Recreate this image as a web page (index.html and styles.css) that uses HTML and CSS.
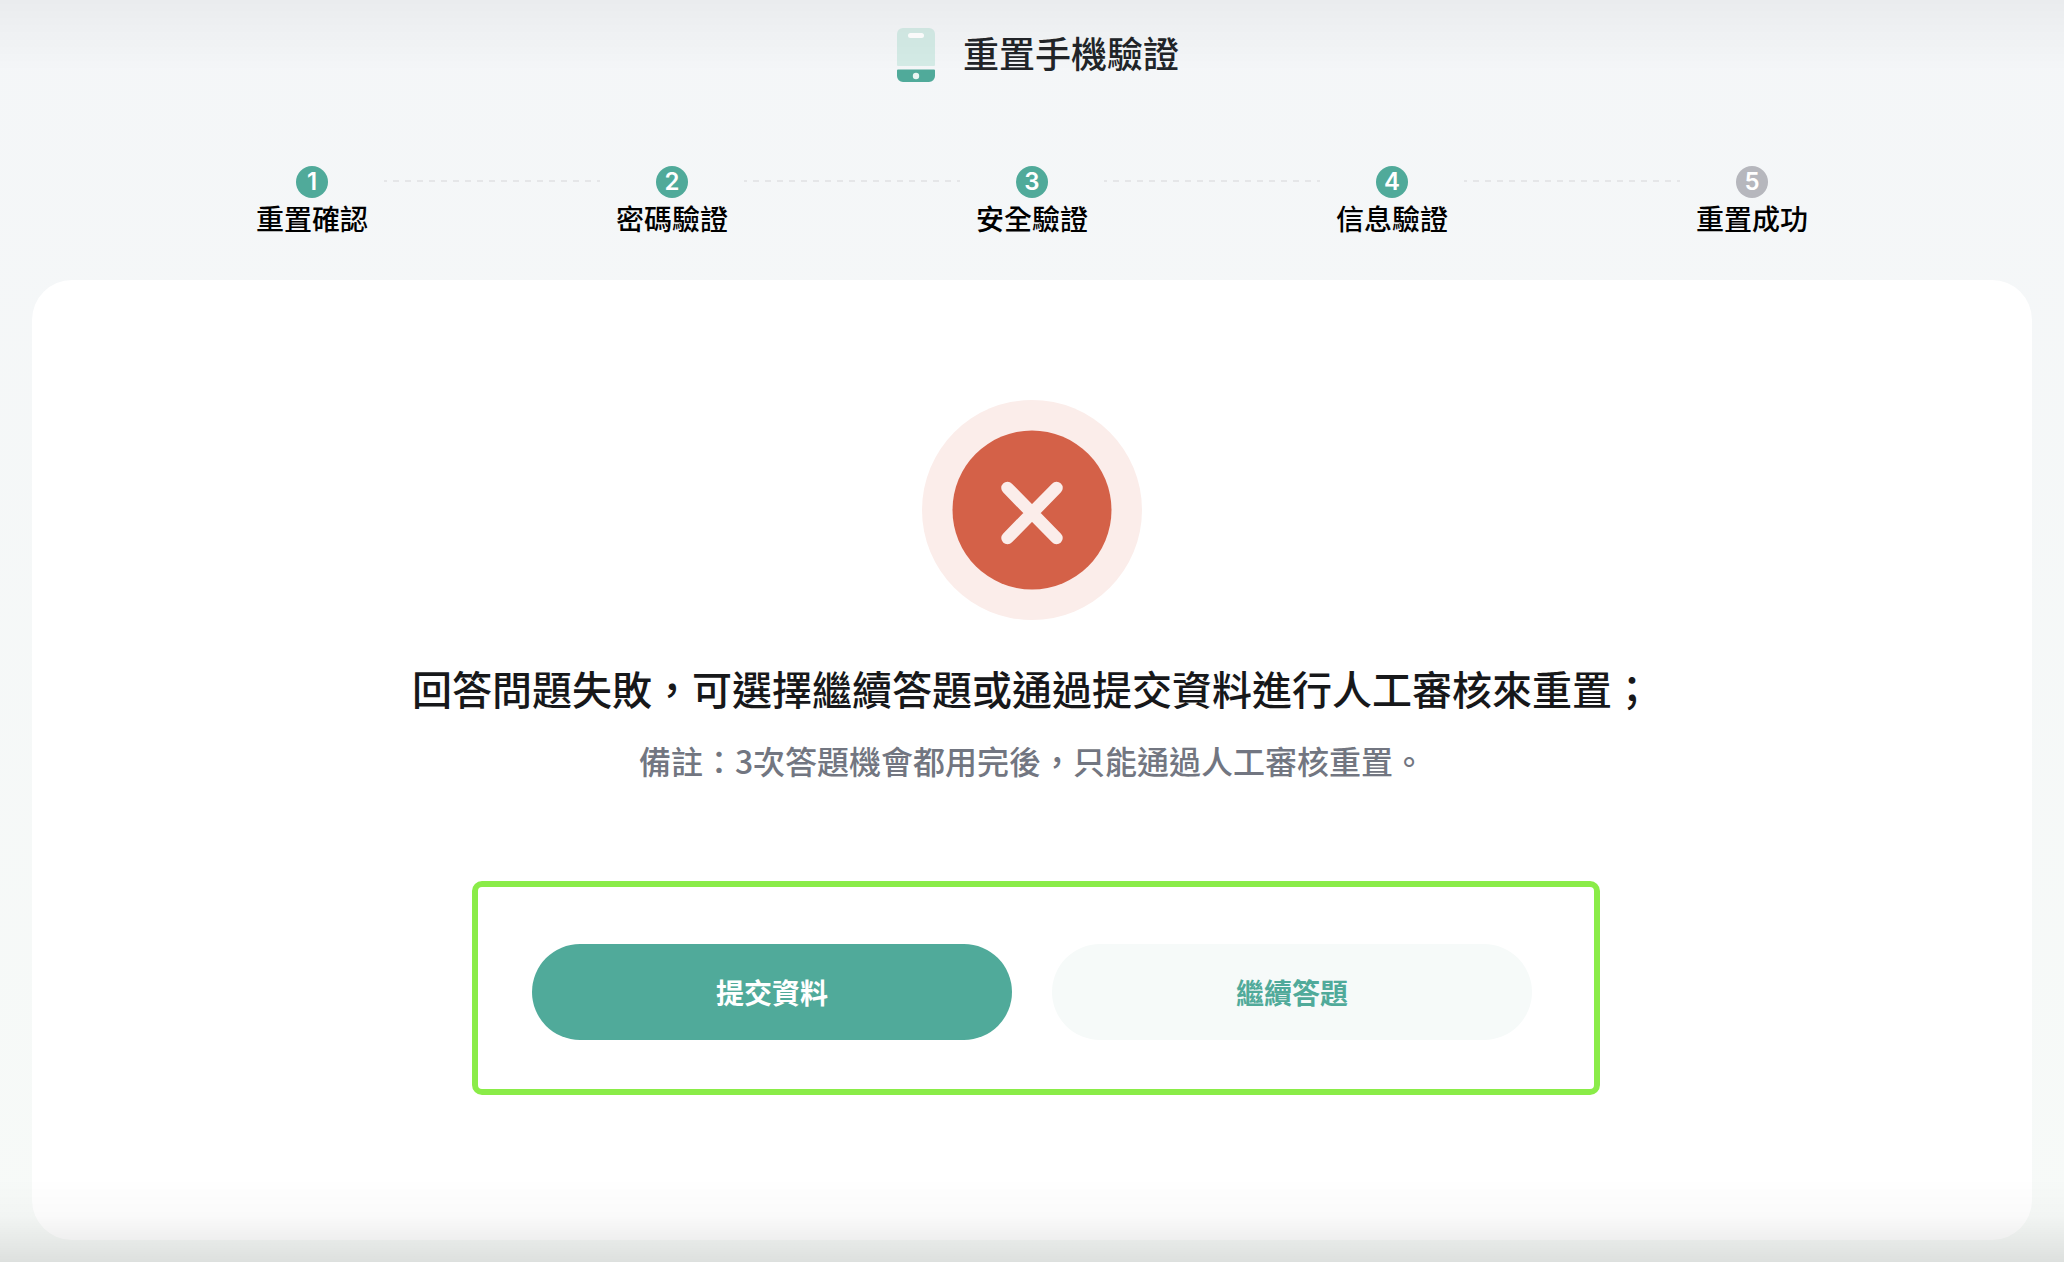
FILE: index.html
```html
<!DOCTYPE html>
<html lang="zh-Hant">
  <head>
    <meta charset="utf-8">
    <meta name="viewport" content="width=device-width, initial-scale=1">
    <title>重置手機驗證</title>
    <link rel="stylesheet" href="styles.css">
  </head>
  <body>
    <header class="header">
      <svg class="phone-icon" viewBox="0 0 38 54" aria-hidden="true">
        <path fill="#d4ebe6" d="M6 0h26a6 6 0 0 1 6 6v31a1 1 0 0 1-1 1H1a1 1 0 0 1-1-1V6a6 6 0 0 1 6-6z" />
        <rect x="11" y="5" width="16" height="5" rx="2.5" fill="#fff" />
        <path fill="#50aa9a" d="M1 41.500h36a1 1 0 0 1 1 1V48a6 6 0 0 1-6 6H6a6 6 0 0 1-6-6v-5.500a1 1 0 0 1 1-1z" />
        <circle cx="19" cy="48" r="3.200" fill="#e9f5f2" />
      </svg>
      <h1>重置手機驗證</h1>
    </header>

    <ol class="steps">
      <li class="step">
        <span class="step-number">1</span>
        <span class="step-label">重置確認</span>
      </li>
      <li class="step-line"></li>
      <li class="step">
        <span class="step-number">2</span>
        <span class="step-label">密碼驗證</span>
      </li>
      <li class="step-line"></li>
      <li class="step">
        <span class="step-number">3</span>
        <span class="step-label">安全驗證</span>
      </li>
      <li class="step-line"></li>
      <li class="step">
        <span class="step-number">4</span>
        <span class="step-label">信息驗證</span>
      </li>
      <li class="step-line"></li>
      <li class="step">
        <span class="step-number pending">5</span>
        <span class="step-label">重置成功</span>
      </li>
    </ol>

    <main class="card">
      <svg class="fail-icon" viewBox="0 0 220 220" aria-hidden="true">
        <circle cx="110" cy="110" r="110" fill="#fbedea" />
        <circle cx="110" cy="110" r="79.500" fill="#d46148" />
        <path d="M85.500 88l49 50M134.500 88l-49 50" stroke="#fbedea" stroke-width="12.500" stroke-linecap="round" />
      </svg>
      <h2>回答問題失敗，可選擇繼續答題或通過提交資料進行人工審核來重置；</h2>
      <p class="note">備註：3次答題機會都用完後，只能通過人工審核重置。</p>

      <div class="actions">
        <button type="button" class="btn primary">提交資料</button>
        <button type="button" class="btn secondary">繼續答題</button>
      </div>
    </main>
  </body>
</html>
```

FILE: styles.css
```css
* {
  box-sizing: border-box;
}

body {
  margin: 0;
  padding: 22px 32px;
  min-height: 100vh;
  display: flex;
  flex-direction: column;
  font-family: "Noto Sans CJK TC", sans-serif;
  font-weight: 500;
  color: #000;
  background: linear-gradient(#f4f6f8, #f7faf8);
}

/* soft shade along the top and bottom of the window */
body::after {
  content: "";
  position: fixed;
  inset: 0;
  pointer-events: none;
  background:
    linear-gradient(rgba(0, 0, 0, 0.04), transparent) top / 100% 72px no-repeat,
    linear-gradient(transparent, rgba(0, 0, 0, 0.02) 45%, rgba(0, 0, 0, 0.1)) bottom / 100% 84px no-repeat;
}

.header {
  display: flex;
  align-items: flex-end;
  justify-content: center;
  gap: 28px;
  padding-left: 12px;
}

.phone-icon {
  width: 38px;
  height: 54px;
}

h1 {
  margin: 0;
  font-size: 36px;
  line-height: 60px;
  font-weight: 500;
  color: #222529;
}

.steps {
  display: flex;
  justify-content: center;
  list-style: none;
  margin: 84px 0 42px;
  padding: 0;
}

.step {
  display: flex;
  flex-direction: column;
  align-items: center;
  width: 144px;
}

.step-number {
  width: 32px;
  height: 32px;
  border-radius: 50%;
  background: #50aa9a;
  color: #fff;
  font-family: Inter, sans-serif;
  font-size: 24px;
  font-weight: 600;
  line-height: 32px;
  text-align: center;
}

.step-number.pending {
  background: #b6b7bd;
}

.step-label {
  font-size: 28px;
  line-height: 40px;
}

.step-line {
  flex: 0 1 216px;
  height: 2px;
  margin-top: 14px;
  background: repeating-linear-gradient(90deg, #e5e6e8 0 3px, transparent 3px 9px, #e5e6e8 9px 12px);
}

.card {
  flex: 1;
  display: flex;
  flex-direction: column;
  align-items: center;
  padding: 120px 40px 200px;
  border-radius: 40px;
  background: #fff;
}

.fail-icon {
  width: 220px;
  height: 220px;
}

h2 {
  margin: 38px 0 0;
  font-size: 40px;
  line-height: 60px;
  font-weight: 500;
  color: #17181a;
}

.note {
  margin: 18px 0 0;
  font-size: 32px;
  line-height: 48px;
  color: #727681;
}

.actions {
  position: relative;
  display: flex;
  gap: 40px;
  margin-top: 160px;
}

/* highlight frame drawn around the two buttons */
.actions::after {
  content: "";
  position: absolute;
  inset: -63px -68px -55px -60px;
  border: 6px solid #8aec48;
  border-radius: 10px;
  pointer-events: none;
}

.btn {
  width: 480px;
  height: 96px;
  border: none;
  border-radius: 48px;
  font-family: inherit;
  font-size: 28px;
  font-weight: 700;
  cursor: pointer;
}

.btn.primary {
  background: #50aa9a;
  color: #fff;
}

.btn.secondary {
  background: #f6faf9;
  color: #50aa9a;
}
```
